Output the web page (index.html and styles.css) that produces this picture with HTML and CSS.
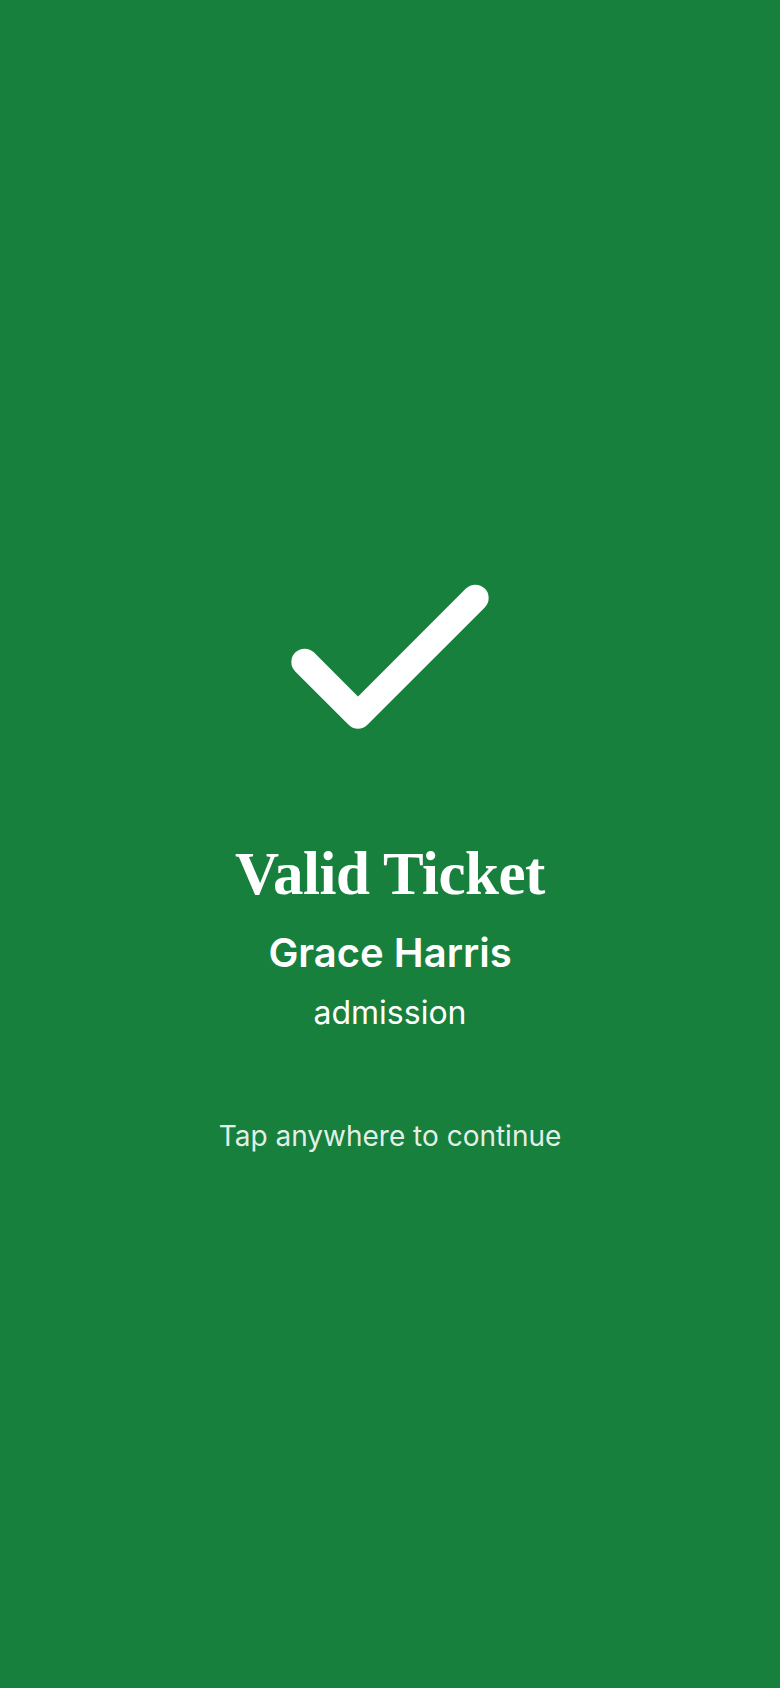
FILE: index.html
```html
<!DOCTYPE html>
<html lang="en">
<head>
<meta charset="utf-8">
<title>Valid Ticket</title>
<link rel="stylesheet" href="styles.css">
</head>
<body>
<main class="screen">
  <svg class="check" width="256" height="256" viewBox="0 0 24 24" fill="none" stroke="#ffffff" stroke-width="2.5" stroke-linecap="round" stroke-linejoin="round" aria-hidden="true">
    <path d="M20 6 9 17l-5-5"/>
  </svg>
  <h1 class="title">Valid Ticket</h1>
  <p class="name">Grace Harris</p>
  <p class="type">admission</p>
  <p class="hint">Tap anywhere to continue</p>
</main>
</body>
</html>
```
FILE: styles.css
```css
html, body {
  margin: 0;
  padding: 0;
  height: 100%;
}
body {
  background: #17803d;
  color: #ffffff;
  font-family: Inter, "Noto Sans", sans-serif;
}
.screen {
  min-height: 100vh;
  display: flex;
  flex-direction: column;
  align-items: center;
  justify-content: center;
  text-align: center;
}
.check {
  display: block;
}
.title {
  margin: 47px 0 0;
  font-family: "Liberation Serif", serif;
  font-weight: 700;
  font-size: 61px;
  line-height: 1.2;
  letter-spacing: -0.5px;
}
.name {
  margin: 19px 0 0;
  font-size: 40px;
  font-weight: 600;
  line-height: 1.2;
}
.type {
  margin: 17px 0 0;
  font-size: 32px;
  font-weight: 400;
  line-height: 1.2;
}
.hint {
  margin: 88px 0 0;
  font-size: 28px;
  font-weight: 400;
  line-height: 1.2;
  color: rgba(255, 255, 255, 0.9);
}
```
